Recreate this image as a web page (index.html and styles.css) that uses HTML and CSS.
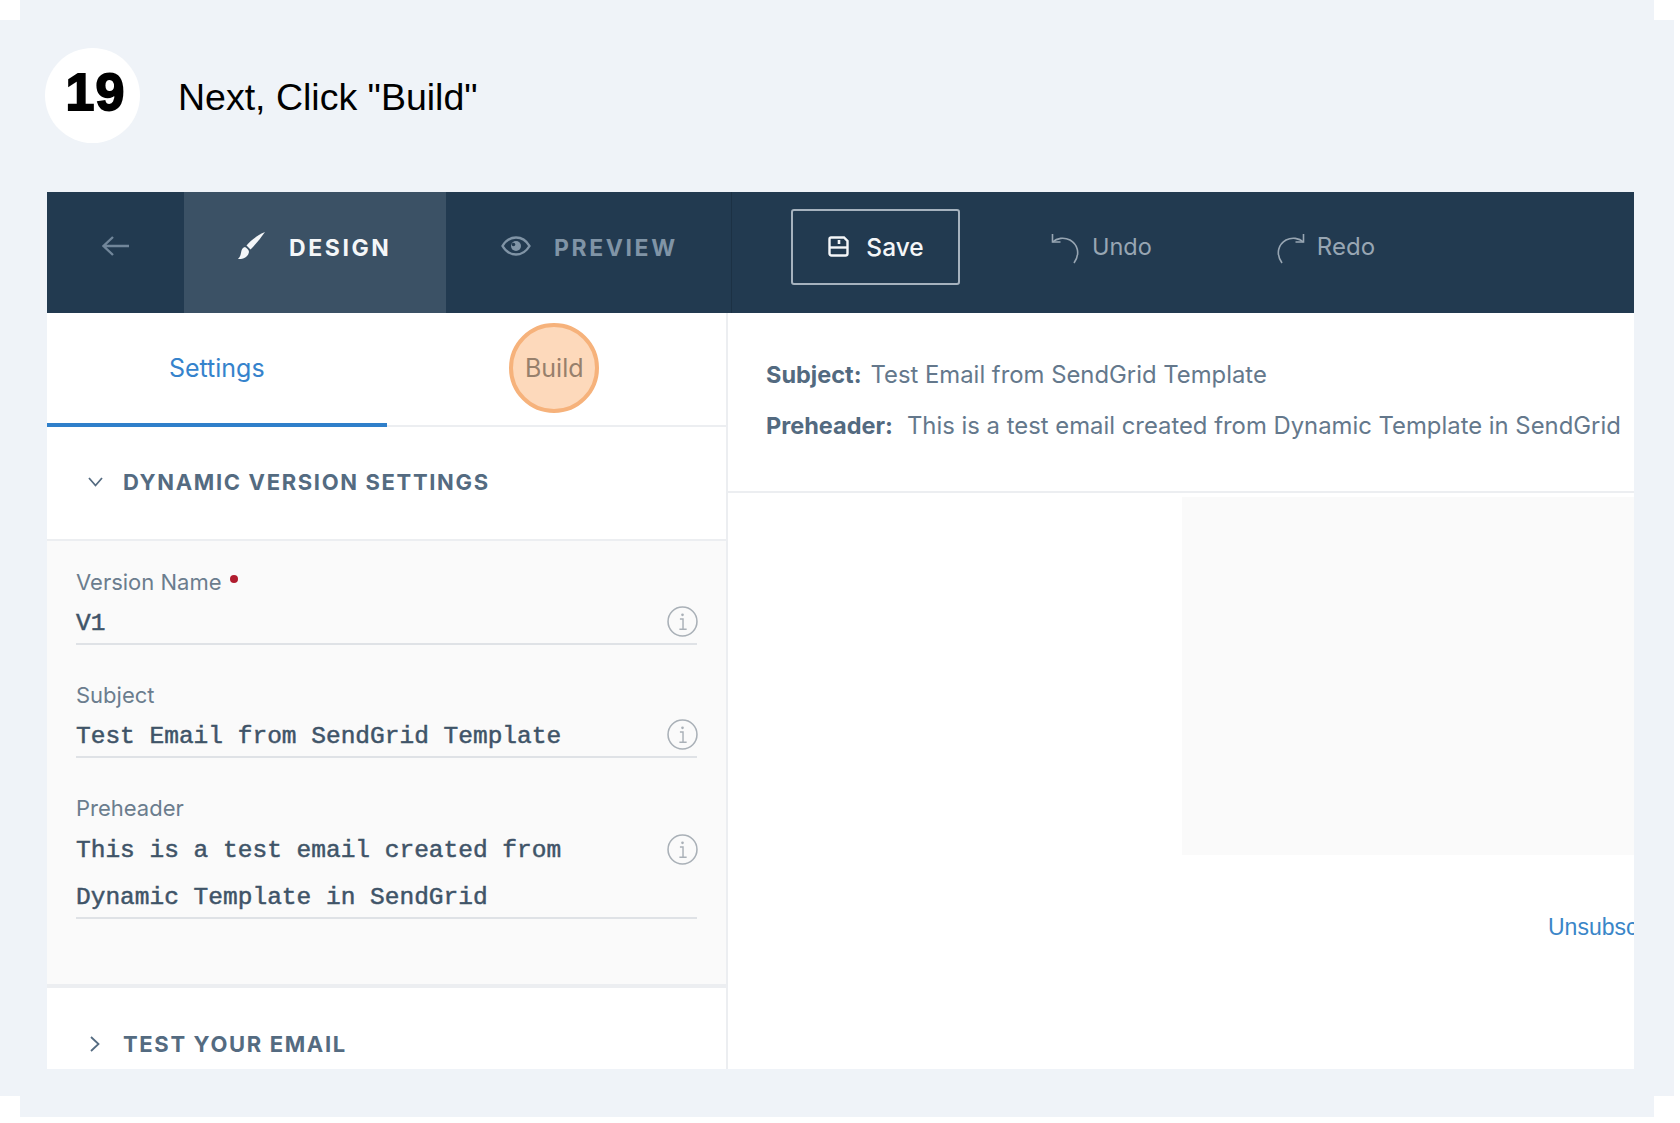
FILE: index.html
```html
<!DOCTYPE html>
<html lang="en">
<head>
<meta charset="utf-8">
<title>Next, Click "Build"</title>
<link rel="stylesheet" href="styles.css">
</head>
<body>
<div class="sheet">
  <span class="notch notch-tl"></span>
  <span class="notch notch-tr"></span>
  <span class="notch notch-bl"></span>
  <span class="notch notch-br"></span>
  <header class="step">
    <div class="step-badge">19</div>
    <h1 class="step-title">Next, Click "Build"</h1>
  </header>
  <section class="card">
    <nav class="toolbar">
      <div class="tool-back">
        <svg class="icon-back" viewBox="0 0 28 20"><path d="M27 10H2M11 1 1.500 10 11 19" fill="none" stroke="#71869a" stroke-width="2.400"/></svg>
      </div>
      <div class="tool-tab tool-tab-active">
        <svg class="icon-brush" viewBox="0 0 27 28"><path d="M27 1C22 8 17 14 12.500 18.500L8.500 14.500C13 9 20 4 27 1Z" fill="#f4f6f8"/><path d="M7 16C3 17 3.500 21 2.500 24C2 26 .5 27 0 28C4 28.500 10 27 11 21C11 19 9 17 7 16Z" fill="#f4f6f8"/></svg>
        <span>DESIGN</span>
      </div>
      <div class="tool-tab tool-tab-muted">
        <svg class="icon-eye" viewBox="0 0 30 20"><path d="M1.500 10C5 4 10 1.500 15 1.500S25 4 28.500 10C25 16 20 18.500 15 18.500S5 16 1.500 10Z" fill="none" stroke="#8094a6" stroke-width="2.400"/><circle cx="15" cy="10" r="5" fill="#8094a6"/><circle cx="12.500" cy="8.500" r="1.800" fill="#223a50"/></svg>
        <span>PREVIEW</span>
      </div>
      <div class="tool-actions">
        <button class="save-btn" type="button">
          <svg class="icon-save" viewBox="0 0 21 21"><path d="M3 1.500H16L19.500 5V17.500A2 2 0 0 1 17.500 19.500H3.500A2 2 0 0 1 1.500 17.500V3A1.500 1.500 0 0 1 3 1.500Z" fill="none" stroke="#f4f6f8" stroke-width="2.400"/><path d="M1.500 11.500H19.500" stroke="#f4f6f8" stroke-width="2.400"/><path d="M11 4V8" stroke="#f4f6f8" stroke-width="2.600"/></svg>
          <span>Save</span>
        </button>
        <div class="history history-undo">
          <svg class="icon-history" viewBox="0 0 29 30"><path d="M1.500 1V9H9.500" fill="none" stroke="#98a6b3" stroke-width="1.600" transform="translate(0 -1)"/><path d="M1.500 8C6 4 13 3 19 6C26 10 30 19 23 29" fill="none" stroke="#98a6b3" stroke-width="1.600"/></svg>
          <span>Undo</span>
        </div>
        <div class="history history-redo">
          <svg class="icon-history" viewBox="0 0 29 30"><path d="M27.500 1V9H19.500" fill="none" stroke="#98a6b3" stroke-width="1.600" transform="translate(0 -1)"/><path d="M27.500 8C23 4 16 3 10 6C3 10 -1 19 6 29" fill="none" stroke="#98a6b3" stroke-width="1.600"/></svg>
          <span>Redo</span>
        </div>
      </div>
    </nav>
    <div class="workspace">
      <aside class="sidebar">
        <div class="tabs">
          <div class="tab tab-active">Settings</div>
          <div class="tab tab-build"><span class="build-mark">Build</span></div>
        </div>
        <div class="section-head section-head-open">
          <svg class="chevron-down" viewBox="0 0 15 10"><path d="M1 1 7.500 8.500 14 1" fill="none" stroke="#546b81" stroke-width="1.800"/></svg>
          <span>DYNAMIC VERSION SETTINGS</span>
        </div>
        <div class="form">
          <div class="field">
            <label class="field-label">Version Name <i class="required"></i></label>
            <div class="field-input">
              <div class="field-value">V1</div>
              <svg class="icon-info" viewBox="0 0 30 30"><circle cx="15" cy="15" r="14" fill="none" stroke="#a9b0b7" stroke-width="1.500"/><circle cx="15" cy="8.500" r="1.300" fill="#a9b0b7"/><path d="M12.500 12.500H15.500V22M12 22.500H19" fill="none" stroke="#a9b0b7" stroke-width="1.400"/></svg>
            </div>
          </div>
          <div class="field">
            <label class="field-label">Subject</label>
            <div class="field-input">
              <div class="field-value">Test Email from SendGrid Template</div>
              <svg class="icon-info" viewBox="0 0 30 30"><circle cx="15" cy="15" r="14" fill="none" stroke="#a9b0b7" stroke-width="1.500"/><circle cx="15" cy="8.500" r="1.300" fill="#a9b0b7"/><path d="M12.500 12.500H15.500V22M12 22.500H19" fill="none" stroke="#a9b0b7" stroke-width="1.400"/></svg>
            </div>
          </div>
          <div class="field">
            <label class="field-label">Preheader</label>
            <div class="field-input field-input-multi">
              <div class="field-value">This is a test email created from<br>Dynamic Template in SendGrid</div>
              <svg class="icon-info" viewBox="0 0 30 30"><circle cx="15" cy="15" r="14" fill="none" stroke="#a9b0b7" stroke-width="1.500"/><circle cx="15" cy="8.500" r="1.300" fill="#a9b0b7"/><path d="M12.500 12.500H15.500V22M12 22.500H19" fill="none" stroke="#a9b0b7" stroke-width="1.400"/></svg>
            </div>
          </div>
        </div>
        <div class="section-head section-head-closed">
          <svg class="chevron-right" viewBox="0 0 10 16"><path d="M1 1 8.500 8 1 15" fill="none" stroke="#546b81" stroke-width="1.800"/></svg>
          <span>TEST YOUR EMAIL</span>
        </div>
      </aside>
      <main class="preview">
        <div class="meta">
          <p class="meta-row"><b>Subject:</b><span>Test Email from SendGrid Template</span></p>
          <p class="meta-row meta-row-pre"><b>Preheader:</b><span>This is a test email created from Dynamic Template in SendGrid</span></p>
        </div>
        <div class="canvas">
          <div class="canvas-block"></div>
          <a class="unsubscribe">Unsubscribe</a>
        </div>
      </main>
    </div>
  </section>
</div>
</body>
</html>
```
FILE: styles.css
```css
* { box-sizing: border-box; }
html, body { margin: 0; padding: 0; background: #fff; }
body { width: 1680px; height: 1123px; overflow: hidden; font-family: "Inter", "Liberation Sans", sans-serif; }

.sheet { position: relative; width: 1674px; height: 1117px; background: #eff3f8; padding: 48px 0 0 45px; }
.notch { position: absolute; background: #fff; height: 21px; width: 20px; }
.notch-tl { top: 0; left: 0; height: 20px; }
.notch-tr { top: 0; left: 1654px; height: 20px; width: 26px; }
.notch-bl { top: 1096px; left: 0; }
.notch-br { top: 1096px; left: 1654px; width: 26px; }

.step { display: flex; align-items: center; height: 95px; }
.step-badge { width: 95px; height: 95px; border-radius: 50%; background: #fff; display: flex; align-items: center; justify-content: center; padding: 0 0 7px 6px; font: 700 52px "Liberation Sans", sans-serif; color: #000; -webkit-text-stroke: 1.8px #000; letter-spacing: 1px; }
.step-title { margin: 4px 0 0 38px; font: 400 37.500px "Liberation Sans", sans-serif; color: #000; }

.card { width: 1587px; height: 877px; margin: 49px 0 0 2px; background: #fff; overflow: hidden; }

.toolbar { display: flex; height: 121px; background: #223a50; }
.tool-back { width: 137px; display: flex; align-items: center; justify-content: center; padding: 0 0 14px 0; }
.icon-back { width: 28px; height: 20px; }
.tool-tab { display: flex; align-items: center; font-size: 23px; font-weight: 700; letter-spacing: 2.6px; padding-bottom: 10px; }
.tool-tab-active { width: 262px; background: #3b5165; color: #f4f6f8; padding-left: 54px; }
.icon-brush { width: 27px; height: 28px; margin: -6px 24px 0 0; }
.tool-tab-muted { width: 286px; color: #8094a6; padding-left: 55px; border-right: 1px solid #1c3144; }
.icon-eye { width: 30px; height: 20px; margin: -4px 23px 0 0; }
.tool-actions { display: flex; align-items: flex-start; padding: 17px 0 0 59px; }
.save-btn { width: 169px; height: 76px; display: flex; align-items: center; justify-content: center; gap: 17px; background: transparent; border: 2px solid #a6b2be; border-radius: 3px; color: #f4f6f8; font: 500 24.500px "Inter", sans-serif; padding: 0 0 1px 1px; }
.icon-save { width: 21px; height: 21px; }
.history { display: flex; align-items: center; height: 76px; gap: 12px; color: #98a6b3; font-size: 23.500px; padding-bottom: 1px; }
.history-undo { margin-left: 91px; }
.history-redo { margin-left: 124px; }
.history-redo span { font-size: 24px; }
.icon-history { width: 29px; height: 30px; margin-top: 4px; }

.workspace { display: flex; height: 756px; }
.sidebar { width: 681px; flex: none; border-right: 2px solid #eceef1; display: flex; flex-direction: column; }
.tabs { display: flex; height: 114px; border-bottom: 2px solid #eceef1; }
.tab { width: 340px; height: 114px; display: flex; align-items: center; justify-content: center; font-size: 25px; padding-top: 5px; }
.tab-active { color: #3583cc; border-bottom: 4px solid #2f7fca; padding-bottom: 6px; }
.build-mark { width: 90px; height: 90px; margin: -9px 0 0 -4px; border-radius: 50%; background: #fdd9bb; border: 4px solid #f6b27b; color: #97806c; display: flex; align-items: center; justify-content: center; }

.section-head { display: flex; align-items: center; font-size: 22px; font-weight: 700; letter-spacing: 1.65px; color: #546b81; padding-left: 41px; }
.section-head-open { height: 114px; border-bottom: 2px solid #eceef1; padding-bottom: 2px; }
.section-head-open .chevron-down { width: 15px; height: 10px; margin-right: 20px; }
.section-head-closed { height: 81px; padding-top: 31px; padding-left: 43px; }
.section-head-closed .chevron-right { width: 10px; height: 16px; margin-right: 23px; }

.form { height: 447px; background: #fafafa; border-bottom: 4px solid #eceef1; padding: 26px 28px 0 29px; display: flex; flex-direction: column; gap: 35px; }
.field-label { display: flex; align-items: center; height: 30px; font-size: 22px; color: #6b7d8e; white-space: pre; }
.required { width: 8px; height: 8px; margin: -6px 0 0 2px; border-radius: 50%; background: #b01c2e; }
.field-input { display: flex; align-items: flex-start; justify-content: space-between; border-bottom: 2px solid #dfe2e6; height: 48px; padding-top: 3px; margin-right: 1px; }
.field-input .icon-info { margin-top: 6px; }
.field-input-multi { height: 96px; padding-top: 4px; }
.field-input-multi .icon-info { margin-top: 7px; }
.field-value { font: 400 24.500px/47px "Liberation Mono", monospace; color: #3f5468; -webkit-text-stroke: 0.5px #3f5468; }
.icon-info { width: 31px; height: 31px; flex: none; margin-right: -1px; }

.preview { flex: 1; min-width: 0; display: flex; flex-direction: column; overflow: hidden; }
.meta { height: 180px; border-bottom: 2px solid #eceef1; padding: 43px 0 0 38px; }
.meta-row { margin: 0; height: 36px; display: flex; align-items: center; font-size: 23.500px; color: #64788c; white-space: nowrap; }
.meta-row span { font-size: 23.850px; }
.meta-row b { color: #536a80; font-weight: 700; margin-right: 9px; }
.meta-row-pre { margin-top: 15px; }
.meta-row-pre b { margin-right: 14px; }
.canvas { flex: 1; display: flex; flex-direction: column; padding-top: 4px; }
.canvas-block { width: 452px; height: 358px; margin-left: auto; background: #fafafa; }
.unsubscribe { margin: 59px 0 0 820px; font: 400 23px/26px "Liberation Sans", sans-serif; color: #3a86c8; white-space: nowrap; }
```
